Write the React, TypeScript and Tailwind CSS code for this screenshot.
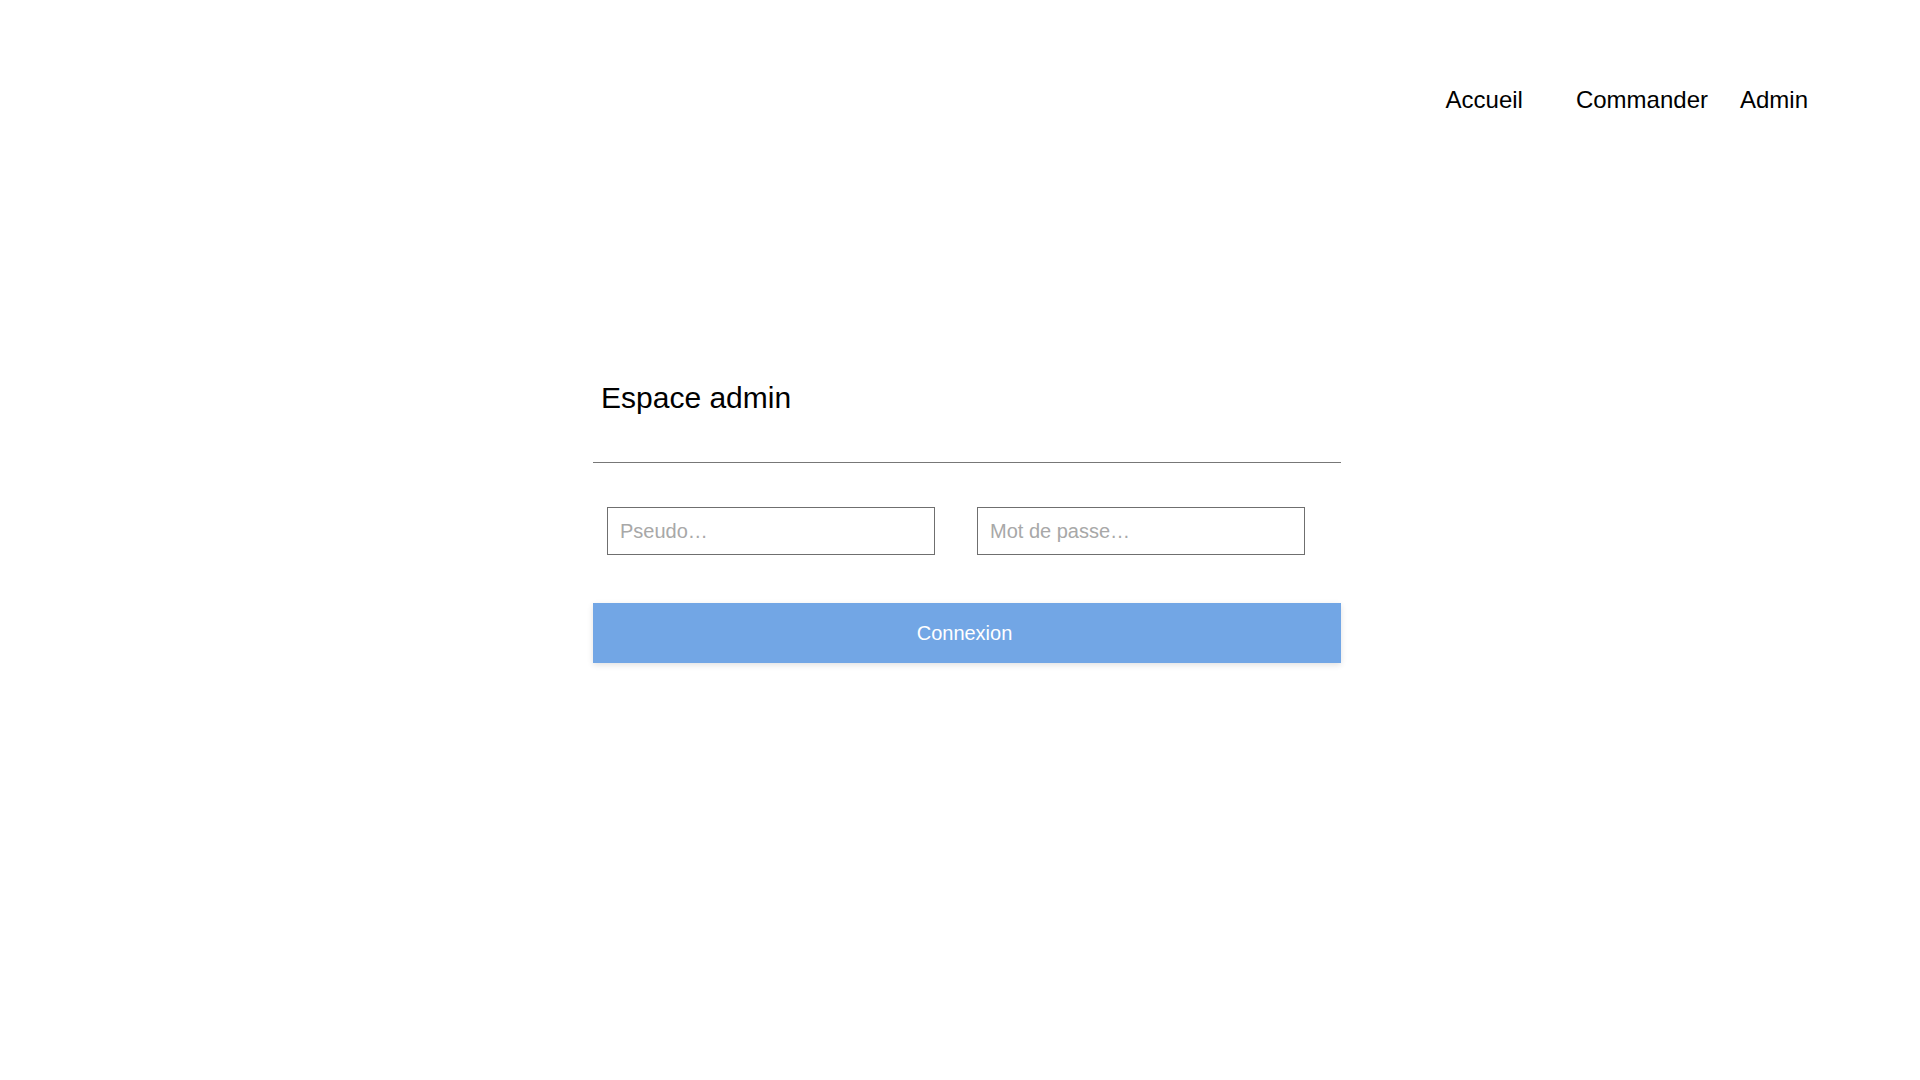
import { useState } from 'react'

export default function App() {
  const [pseudo, setPseudo] = useState('')
  const [password, setPassword] = useState('')

  return (
    <div className="min-h-screen bg-white text-black font-['Liberation_Sans',Arial,sans-serif]">
      <header className="flex justify-end pt-[86px] pr-[112px]">
        <nav className="flex items-center text-[24px] leading-[27px]">
          <a href="#" className="mr-[53px]">Accueil</a>
          <a href="#" className="mr-[32px]">Commander</a>
          <a href="#">Admin</a>
        </nav>
      </header>

      <main className="ml-[593px] w-[748px] mt-[268px]">
        <h2 className="pl-[8px] text-[30px] leading-[34px]">Espace admin</h2>
        <hr className="mt-[47px] border-0 border-t border-[#777]" />

        <form
          onSubmit={(e) => e.preventDefault()}
          className="mt-[44px]"
        >
          <div className="flex gap-[42px] px-[14px]">
            <input
              type="text"
              placeholder="Pseudo…"
              value={pseudo}
              onChange={(e) => setPseudo(e.target.value)}
              className="w-[328px] h-[48px] border border-[#6f6f6f] px-[12px] text-[20px] text-black placeholder-[#a8a8a8] outline-none"
            />
            <input
              type="password"
              placeholder="Mot de passe…"
              value={password}
              onChange={(e) => setPassword(e.target.value)}
              className="w-[328px] h-[48px] border border-[#6f6f6f] px-[12px] text-[20px] text-black placeholder-[#a8a8a8] outline-none"
            />
          </div>

          <button
            type="submit"
            className="mt-[48px] w-full h-[60px] pr-[5px] bg-[#72a6e5] text-white text-[20px] shadow-[0_2px_6px_rgba(0,0,0,0.12)]"
          >
            Connexion
          </button>
        </form>
      </main>
    </div>
  )
}
